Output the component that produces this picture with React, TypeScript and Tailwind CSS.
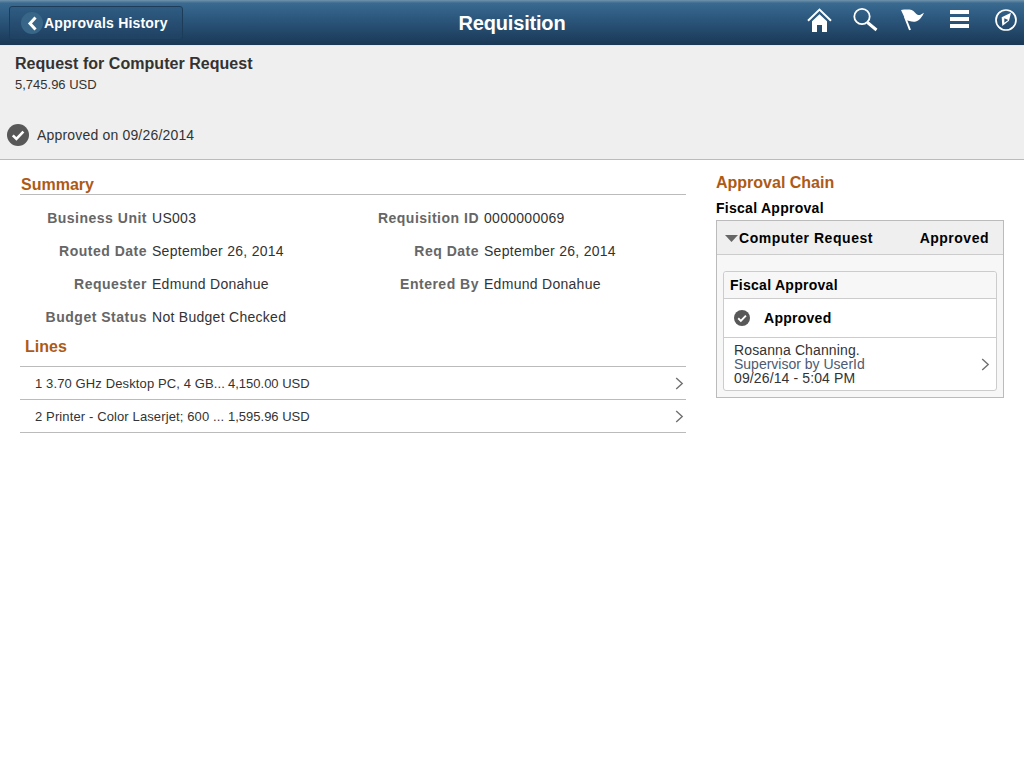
import React from 'react';

const CheckBadge = ({ size }: { size: number }) => (
  <svg width={size} height={size} viewBox="0 0 22 22" className="shrink-0">
    <circle cx="11" cy="11" r="11" fill="#585858" />
    <path d="M5.8 11.4l3.6 3.6 7-7.4" fill="none" stroke="#fff" strokeWidth="2.6" />
  </svg>
);

const Chevron = () => (
  <svg width="9" height="13" viewBox="0 0 9 13" className="shrink-0">
    <path d="M1.2 1l6 5.5-6 5.5" fill="none" stroke="#707070" strokeWidth="1.4" />
  </svg>
);

const HeaderIcons = () => (
  <div className="ml-auto self-start flex items-start pr-[5px]">
    <svg width="26" height="24" viewBox="0 0 26 24" className="mt-[8px]" fill="#fff">
      <path d="M1 12.8L12.500 1.600 24 12.800" fill="none" stroke="#fff" strokeWidth="2" />
      <path d="M12.500 6.200l7.500 7V24h-5v-7h-5v7H5V13.200z" />
    </svg>
    <svg width="26" height="26" viewBox="0 0 26 26" className="ml-[20px] mt-[7px]" fill="none" stroke="#fff">
      <circle cx="9" cy="9.500" r="7.700" strokeWidth="1.800" />
      <path d="M14.500 15.500l9 7.500" strokeWidth="3" />
    </svg>
    <svg width="26" height="26" viewBox="0 0 26 26" className="ml-[21px] mt-[6px]" fill="#fff">
      <path d="M1 4c4-.6 8-.6 10.700 0 2.500.8 4 4 6.300 5 2 .4 4-1 6-2.300-1.500 3.500-4.500 8-9 9-3.500.4-6.500-1-9.500-2z" />
      <path d="M5 11l5 13" stroke="#fff" strokeWidth="2" fill="none" />
    </svg>
    <div className="ml-[24px] mt-[10px] w-[19px] flex flex-col gap-[3px]">
      <div className="h-[4px] bg-white" />
      <div className="h-[4px] bg-white" />
      <div className="h-[4px] bg-white" />
    </div>
    <svg width="24" height="24" viewBox="0 0 24 24" className="ml-[26px] mt-[8px]">
      <circle cx="11" cy="12" r="10" fill="none" stroke="#fff" strokeWidth="1.700" />
      <path d="M16 4.700L6.700 9.300 7.300 18 14 12.700z" fill="#fff" />
      <path d="M9.300 10.300v4.400l4-2.700z" fill="#2a5578" />
    </svg>
  </div>
);

const Field = ({ label, value }: { label: string; value: string }) => (
  <div className="flex items-center h-[33px]">
    <div className="w-[127px] whitespace-nowrap flex justify-end font-bold text-[#666] text-[14px] tracking-[0.5px]">{label}</div>
    <div className="ml-[5px] text-[14px] text-[#333] tracking-[0.28px]">{value}</div>
  </div>
);

const LineRow = ({ no, text, amount }: { no: string; text: string; amount: string }) => (
  <div className="flex items-center h-[33px] border-b border-[#bbb] pl-[15px] pr-[2px] text-[13px] text-[#333]">
    <span className="w-[193px] pt-[1px] whitespace-nowrap tracking-[0.12px]">{no} {text}</span>
    <span className="w-[81px] pt-[1px] pr-[1px] text-right whitespace-nowrap">{amount}</span>
    <span className="flex-1" />
    <Chevron />
  </div>
);

export default function App() {
  return (
    <div className="min-h-[768px] bg-white font-['Liberation_Sans',Arial,sans-serif] relative">
      <header className="h-[46px] relative flex items-center border-b border-[#e8e8e8] bg-[linear-gradient(to_bottom,#6f93ad_0%,#3a6a8f_7%,#2f5d84_30%,#1a3856_100%)]">
        <button className="ml-[9px] self-start mt-[6px] w-[174px] h-[34px] rounded-[3px] border border-[#1c3c5a] bg-gradient-to-b from-[#2f5c83] to-[#1f4162] flex items-center pl-[11px] text-white font-bold text-[14px] tracking-[0.18px]">
          <span className="w-[22px] h-[22px] rounded-full bg-[#386688] flex items-center justify-center">
            <svg width="11" height="15" viewBox="0 0 11 15">
              <path d="M8.500 1.500L3 7.500l5.500 6" fill="none" stroke="#fff" strokeWidth="3" />
            </svg>
          </span>
          <span className="ml-[1px]">Approvals History</span>
        </button>
        <h1 className="absolute inset-x-0 text-center text-white font-bold text-[20px] tracking-[-0.18px]">Requisition</h1>
        <HeaderIcons />
      </header>

      <section className="h-[114px] bg-[#efefef] border-b border-[#bbb]">
        <div className="pl-[15px] pt-[8px] text-[16px] font-bold text-[#333] leading-[20px] tracking-[0.04px]">Request for Computer Request</div>
        <div className="pl-[15px] pt-[3px] text-[13px] text-[#333] leading-[16px]">5,745.96 USD</div>
        <div className="flex items-center pl-[7px] mt-[30px] h-[24px]">
          <CheckBadge size={22} />
          <span className="ml-[8px] text-[14px] text-[#333] tracking-[0.18px]">Approved on 09/26/2014</span>
        </div>
      </section>

      <main className="flex">
        <div className="w-[666px] ml-[20px]">
          <div className="mt-[15px] h-[20px] border-b border-[#bbb] text-[16px] font-bold text-[#ad5a17] leading-[19px] pl-[1px]">Summary</div>
          <div className="mt-[7px] flex">
            <div className="w-[332px]">
              <Field label="Business Unit" value="US003" />
              <Field label="Routed Date" value="September 26, 2014" />
              <Field label="Requester" value="Edmund Donahue" />
              <Field label="Budget Status" value="Not Budget Checked" />
            </div>
            <div>
              <Field label="Requisition ID" value="0000000069" />
              <Field label="Req Date" value="September 26, 2014" />
              <Field label="Entered By" value="Edmund Donahue" />
            </div>
          </div>
          <div className="pl-[5px] h-[29px] text-[16px] font-bold text-[#ad5a17] leading-[19px] mt-[3px]">Lines</div>
          <div className="border-t border-[#bbb]">
            <LineRow no="1" text="3.70 GHz Desktop PC, 4 GB..." amount="4,150.00 USD" />
            <LineRow no="2" text="Printer - Color Laserjet; 600 ..." amount="1,595.96 USD" />
          </div>
        </div>

        <aside className="w-[288px] ml-[30px]">
          <div className="mt-[13px] text-[16px] font-bold text-[#ad5a17] leading-[19px]">Approval Chain</div>
          <div className="mt-[8px] text-[14px] font-bold text-black leading-[17px] tracking-[0.27px]">Fiscal Approval</div>
          <div className="mt-[3px] border border-[#bbb] bg-[#f7f7f7]">
            <div className="h-[34px] pt-[1px] bg-[#efefef] border-b border-[#ccc] flex items-center pl-[8px] pr-[14px] text-[14px] font-bold text-black">
              <svg width="13" height="7" viewBox="0 0 13 7" className="shrink-0"><path d="M0 0h13L6.500 7z" fill="#666" /></svg>
              <span className="ml-[1px] flex-1 tracking-[0.55px]">Computer Request</span>
              <span className="tracking-[0.5px]">Approved</span>
            </div>
            <div className="px-[6px] pt-[16px] pb-[6px]">
              <div className="border border-[#ccc] rounded-[3px] bg-white">
                <div className="h-[27px] bg-[#f7f7f7] rounded-t-[3px] border-b border-[#ccc] flex items-center pl-[6px] text-[14px] font-bold text-black tracking-[0.27px]">Fiscal Approval</div>
                <div className="h-[39px] border-b border-[#ccc] flex items-center pl-[10px] text-[14px] font-bold text-black">
                  <CheckBadge size={16} />
                  <span className="ml-[14px] tracking-[0.27px]">Approved</span>
                </div>
                <div className="h-[52px] flex items-center pl-[10px] pr-[6px]">
                  <div className="flex-1 text-[14px] leading-[14px]">
                    <div className="text-[#333] tracking-[0.12px]">Rosanna Channing.</div>
                    <div className="text-[#4d5a73]">Supervisor by UserId</div>
                    <div className="text-[#333] tracking-[0.12px]">09/26/14 - 5:04 PM</div>
                  </div>
                  <Chevron />
                </div>
              </div>
            </div>
          </div>
        </aside>
      </main>
    </div>
  );
}
